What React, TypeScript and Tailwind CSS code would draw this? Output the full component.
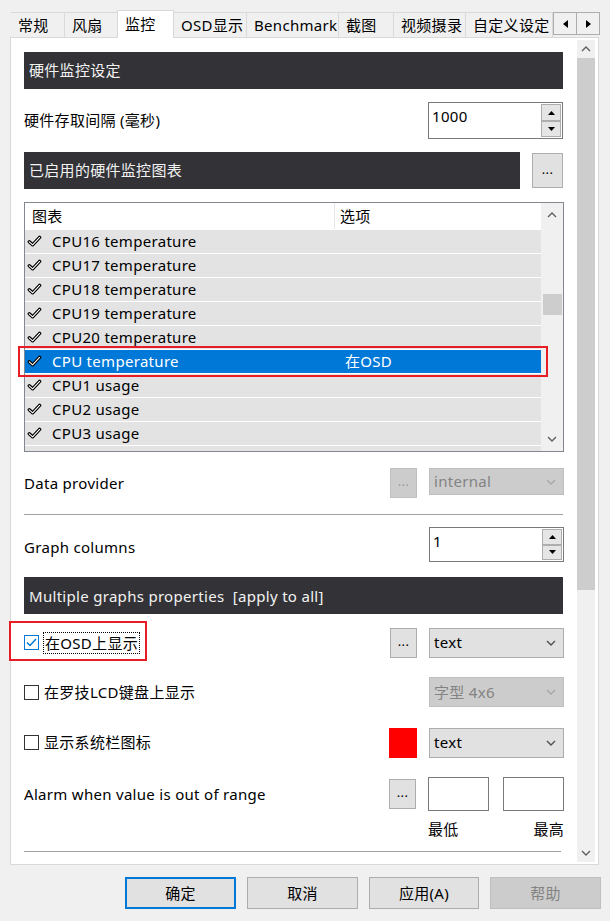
import React from 'react';

const tabs = [
  { label: '常规', w: 'w-[53px]' },
  { label: '风扇', w: 'w-[53px]' },
  { label: '监控', w: 'w-[57px]', active: true },
  { label: 'OSD显示', w: 'w-[72px]' },
  { label: 'Benchmark', w: 'w-[92px]' },
  { label: '截图', w: 'w-[55px]' },
  { label: '视频摄录', w: 'w-[72px]' },
  { label: '自定义设定', w: 'w-[88px]' },
];

const graphs: { name: string; opt?: string; selected?: boolean }[] = [
  { name: 'CPU16 temperature' },
  { name: 'CPU17 temperature' },
  { name: 'CPU18 temperature' },
  { name: 'CPU19 temperature' },
  { name: 'CPU20 temperature' },
  { name: 'CPU temperature', opt: '在OSD', selected: true },
  { name: 'CPU1 usage' },
  { name: 'CPU2 usage' },
  { name: 'CPU3 usage' },
  { name: 'CPU4 usage' },
];

const Tick = () => (
  <svg width="15" height="13" viewBox="0 0 15 13" className="shrink-0">
    <path d="M2.3 6.8 L5.6 9.8 L12.6 2.4" fill="none" stroke="#000" strokeWidth="3.4" strokeLinecap="round" strokeLinejoin="round" />
    <path d="M2.3 6.8 L5.6 9.8 L12.6 2.4" fill="none" stroke="#fff" strokeWidth="1.1" strokeLinecap="round" strokeLinejoin="round" />
  </svg>
);

const Chevron = ({ up, color = '#606060' }: { up?: boolean; color?: string }) => (
  <svg width="10" height="6" viewBox="0 0 10 6">
    <path d={up ? 'M1 5 L5 1 L9 5' : 'M1 1 L5 5 L9 1'} fill="none" stroke={color} strokeWidth="1.4" />
  </svg>
);

const Tri = ({ up }: { up?: boolean }) => (
  <svg width="7" height="4" viewBox="0 0 7 4">
    <path d={up ? 'M0 4 L3.5 0 L7 4 Z' : 'M0 0 L3.5 4 L7 0 Z'} fill="#000" />
  </svg>
);

const DarkBar = ({ children, w = 'w-[539px]', h = 'h-[37px]' }: { children: React.ReactNode; w?: string; h?: string }) => (
  <div className={`${w} ${h} flex items-center bg-[#323237] pl-[5px] text-[#f2f2f2]`}>{children}</div>
);

const DotsButton = ({ disabled }: { disabled?: boolean }) => (
  <div
    className={
      'flex h-[30px] w-[27px] items-center justify-center border pb-[2px] text-[13px] ' +
      (disabled ? 'border-[#bfbfbf] bg-[#cccccc] text-[#9a9a9a]' : 'border-[#adadad] bg-[#e1e1e1] text-black')
    }
  >
    ...
  </div>
);

const Select = ({ value, disabled, h = 'h-[30px]' }: { value: string; disabled?: boolean; h?: string }) => (
  <div
    className={
      `${h} flex w-[135px] items-center justify-between border pl-[4px] pr-[7px] ` +
      (disabled ? 'border-[#bfbfbf] bg-[#cccccc] text-[#838383]' : 'border-[#adadad] bg-[#e1e1e1] text-black')
    }
  >
    <span className="leading-none">{value}</span>
    <Chevron color={disabled ? '#a8a8a8' : '#505050'} />
  </div>
);

const Spin = ({ value, h }: { value: string; h: string }) => (
  <div className={`${h} flex w-[135px] border border-[#7a7a7a] bg-white`}>
    <div className="flex-1 pl-[3px] pt-[3px] leading-[20px]">{value}</div>
    <div className="mr-px mt-px flex w-[20px] flex-col justify-between pb-px">
      <div className="flex h-[17px] items-center justify-center border border-[#adadad] bg-[#e5e5e5]">
        <Tri up />
      </div>
      <div className="flex h-[16px] items-center justify-center border border-[#adadad] bg-[#e5e5e5]">
        <Tri />
      </div>
    </div>
  </div>
);

const Checkbox = ({ checked }: { checked?: boolean }) => (
  <div
    className={
      'flex h-[15px] w-[15px] shrink-0 items-center justify-center border bg-white ' +
      (checked ? 'border-[#0078d7]' : 'border-[#333333]')
    }
  >
    {checked && (
      <svg width="11" height="9" viewBox="0 0 11 9">
        <path d="M1 4.5 L4 7.5 L10 1" fill="none" stroke="#0078d7" strokeWidth="1.5" />
      </svg>
    )}
  </div>
);

export default function App() {
  return (
    <div className="relative h-[921px] w-[610px] overflow-hidden bg-[#f0f0f0] font-['Noto_Sans','Noto_Sans_CJK_SC',sans-serif] text-[15px] tracking-[0.3px] text-black">
      {/* tab strip */}
      <div className="flex h-[37px] items-end pl-[11px]">
        {tabs.map((t, i) =>
          t.active ? (
            <div
              key={t.label}
              className={`${t.w} relative z-10 -mb-px flex h-[28px] items-start border border-b-0 border-[#d9d9d9] bg-white pl-[7px] pt-[2px] leading-[22px]`}
            >
              {t.label}
            </div>
          ) : (
            <div
              key={t.label}
              className={
                `${t.w} flex h-[25px] items-center border-t border-[#d9d9d9] bg-[#f0f0f0] pl-[7px] leading-none ` +
                (i === 0 || tabs[i - 1].active ? 'border-l-0 ' : 'border-l ') +
                (i === 0 ? 'border-l ' : '') +
                (i === tabs.length - 1 ? 'border-r' : '')
              }
            >
              {t.label}
            </div>
          ),
        )}
        <div className="mb-[2px] flex h-[23px] self-end border border-[#adadad] bg-[#f0f0f0]">
          <div className="flex w-[23px] items-center justify-center border-r border-[#adadad]">
            <svg width="5" height="8" viewBox="0 0 5 8"><path d="M5 0 L0 4 L5 8 Z" fill="#000" /></svg>
          </div>
          <div className="flex w-[22px] items-center justify-center">
            <svg width="5" height="8" viewBox="0 0 5 8"><path d="M0 0 L5 4 L0 8 Z" fill="#000" /></svg>
          </div>
        </div>
      </div>

      {/* page panel */}
      <div className="ml-[10px] flex h-[828px] w-[589px] border border-[#d9d9d9] bg-white">
        <div className="ml-[13px] flex w-[540px] flex-col">
          <div className="mt-[14px]">
            <DarkBar>硬件监控设定</DarkBar>
          </div>

          <div className="mt-[13px] flex h-[37px] items-center">
            <span>硬件存取间隔 (毫秒)</span>
            <div className="ml-auto mr-px">
              <Spin value="1000" h="h-[37px]" />
            </div>
          </div>

          <div className="mt-[13px] flex items-center">
            <DarkBar w="w-[496px]">已启用的硬件监控图表</DarkBar>
            <div className="ml-[12px] flex h-[35px] w-[31px] items-center justify-center border border-[#adadad] bg-[#e1e1e1] pb-[2px] text-[13px]">
              ...
            </div>
          </div>

          {/* graph list */}
          <div className="mt-[13px] flex h-[250px] w-[540px] border border-[#828790] bg-white">
            <div className="flex w-[516px] flex-col overflow-hidden">
              <div className="flex h-[26px] shrink-0 items-center bg-white">
                <div className="w-[310px] border-r border-[#e5e5e5] pl-[7px] leading-[26px]">图表</div>
                <div className="pl-[5px]">选项</div>
              </div>
              {graphs.map(g => (
                <div
                  key={g.name}
                  className={
                    'mt-px flex h-[23px] shrink-0 items-center ' +
                    (g.selected ? 'bg-[#0078d7] text-white' : 'bg-[#e3e3e3] text-black')
                  }
                >
                  <div className="flex w-[310px] items-center pl-[2px]">
                    <Tick />
                    <span className="ml-[10px] leading-none">{g.name}</span>
                  </div>
                  <span className="pl-[10px] leading-none">{g.opt}</span>
                </div>
              ))}
            </div>
            <div className="flex w-[22px] flex-col items-center bg-[#f0f0f0]">
              <div className="flex h-[22px] w-full items-center justify-center pt-[2px]">
                <Chevron up />
              </div>
              <div className="mt-[69px] h-[21px] w-[19px] bg-[#cdcdcd]" />
              <div className="mt-auto flex h-[22px] w-full items-center justify-center pb-[2px]">
                <Chevron />
              </div>
            </div>
          </div>

          <div className="mt-[16px] flex h-[30px] items-center">
            <span>Data provider</span>
            <div className="ml-auto flex items-start gap-[12px]">
              <DotsButton disabled />
              <Select value="internal" disabled h="h-[27px]" />
            </div>
          </div>

          <div className="mt-[16px] h-px w-[539px] bg-[#a0a0a0]" />

          <div className="mt-[12px] flex h-[35px] items-center">
            <span className="pt-[5px]">Graph columns</span>
            <div className="ml-auto">
              <Spin value="1" h="h-[35px]" />
            </div>
          </div>

          <div className="mt-[15px]">
            <DarkBar h="h-[37px]">
              <span className="pt-[2px]">Multiple graphs properties&nbsp;&nbsp;[apply to all]</span>
            </DarkBar>
          </div>

          <div className="mt-[13px] flex h-[31px] items-center">
            <Checkbox checked />
            <span className="ml-[4px] border border-dotted border-black px-px leading-[20px]">在OSD上显示</span>
            <div className="ml-auto flex items-center gap-[12px]">
              <DotsButton />
              <Select value="text" />
            </div>
          </div>

          <div className="mt-[19px] flex h-[30px] items-center">
            <Checkbox />
            <span className="ml-[5px]">在罗技LCD键盘上显示</span>
            <div className="ml-auto">
              <Select value="字型 4x6" disabled />
            </div>
          </div>

          <div className="mt-[20px] flex h-[31px] items-center">
            <Checkbox />
            <span className="ml-[5px]">显示系统栏图标</span>
            <div className="ml-auto flex items-center gap-[12px]">
              <div className="h-[30px] w-[28px] bg-[#ff0000]" />
              <Select value="text" />
            </div>
          </div>

          <div className="mt-[19px] flex h-[34px] items-center">
            <span>Alarm when value is out of range</span>
            <div className="ml-auto flex items-center">
              <DotsButton />
              <div className="ml-[12px] h-[34px] w-[61px] border border-[#7a7a7a] bg-white" />
              <div className="ml-[14px] h-[34px] w-[61px] border border-[#7a7a7a] bg-white" />
            </div>
          </div>

          <div className="mt-[7px] flex h-[22px] items-center">
            <div className="ml-auto flex w-[136px] justify-between">
              <span>最低</span>
              <span>最高</span>
            </div>
          </div>

          <div className="mt-[11px] h-px w-[537px] bg-[#a0a0a0]" />
        </div>

        {/* page scrollbar */}
        <div className="ml-auto mr-[3px] mt-[2px] flex h-[822px] w-[18px] flex-col bg-[#f0f0f0]">
          <div className="flex h-[18px] items-center justify-center">
            <Chevron up />
          </div>
          <div className="h-[532px] bg-[#cdcdcd]" />
          <div className="mt-auto flex h-[19px] items-center justify-center">
            <Chevron />
          </div>
        </div>
      </div>

      {/* dialog buttons */}
      <div className="mt-[12px] flex pl-[125px]">
        <div className="flex h-[32px] w-[111px] items-center justify-center border-2 border-[#0078d7] bg-[#e1e1e1]">确定</div>
        <div className="ml-[11px] flex h-[32px] w-[111px] items-center justify-center border border-[#adadad] bg-[#e1e1e1]">取消</div>
        <div className="ml-[11px] flex h-[32px] w-[110px] items-center justify-center border border-[#adadad] bg-[#e1e1e1]">应用(A)</div>
        <div className="ml-[11px] flex h-[32px] w-[111px] items-center justify-center border border-[#bfbfbf] bg-[#cccccc] text-[#838383]">帮助</div>
      </div>

      {/* red annotation boxes */}
      <div className="pointer-events-none absolute left-[18px] top-[346px] h-[31px] w-[530px] border-2 border-[#e81c24]" />
      <div className="pointer-events-none absolute left-[9px] top-[621px] h-[40px] w-[138px] border-2 border-[#e81c24]" />
    </div>
  );
}
